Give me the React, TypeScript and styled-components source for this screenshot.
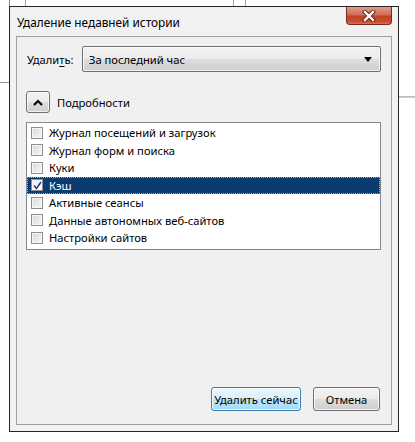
import React from "react";
import styled, { createGlobalStyle } from "styled-components";

const Global = createGlobalStyle`
  html, body { margin: 0; padding: 0; background: #fff; }
  body {
    font-family: "Noto Sans", "Segoe UI", sans-serif;
    font-size: 11.2px;
    color: #000;
  }
  * { box-sizing: border-box; }
`;

const Page = styled.div`
  width: 415px;
  height: 442px;
  padding: 6px 0 0 9px;
  background-color: #fff;
  background-image:
    linear-gradient(#8c8c8c, #8c8c8c),
    linear-gradient(#a8a8a8, #a8a8a8),
    linear-gradient(#a8a8a8, #a8a8a8),
    linear-gradient(#a8a8a8, #a8a8a8),
    linear-gradient(#9a9a9a, #9a9a9a),
    linear-gradient(#b4b4b4, #d8d8d8);
  background-repeat: no-repeat;
  background-size: 1px 6px, 1px 6px, 1px 6px, 1px 6px, 9px 1px, 16px 2px;
  background-position: 9px 0, 25px 0, 233px 0, 245px 0, 0 82px, 399px 96px;
`;

const Window = styled.div`
  width: 390px;
  height: 426px;
  border: 1px solid #262626;
  background: #f1f1f1;
  display: flex;
  flex-direction: column;
  padding: 0 6px 6px 6px;
`;

const TitleBar = styled.div`
  height: 29px;
  flex: none;
  display: flex;
  align-items: center;
  padding-left: 1px;
`;

const Title = styled.span`
  font-size: 11.8px;
  color: #000;
`;

const CloseButton = styled.div`
  margin-left: auto;
  align-self: flex-start;
  width: 46px;
  height: 18px;
  border: 1px solid #7a2a1c;
  border-top: none;
  border-radius: 0 0 4px 4px;
  background: linear-gradient(
    #e29a88 0%,
    #cf6e5a 45%,
    #c0432b 55%,
    #cc4c2d 85%,
    #dc7254 100%
  );
  display: flex;
  align-items: center;
  justify-content: center;
`;

const Client = styled.div`
  flex: 1;
  border: 1px solid #a0a0a0;
  background: #f0f0f0;
  display: flex;
  flex-direction: column;
  padding: 9px 10px 13px 9px;
`;

const FieldRow = styled.div`
  display: flex;
  align-items: center;
`;

const Label = styled.label`
  width: 56px;
  padding-left: 1px;
  color: #000;
  u { text-decoration: underline; text-underline-offset: 2px; }
`;

const Select = styled.div`
  flex: 1;
  height: 26px;
  border: 1px solid #707070;
  border-radius: 2px;
  background: linear-gradient(#f2f2f2 0%, #ebebeb 50%, #dddddd 51%, #cfcfcf 100%);
  box-shadow: inset 0 0 0 1px rgba(255, 255, 255, 0.7);
  display: flex;
  align-items: center;
  padding: 0 8px 0 6px;
`;

const SelectText = styled.span`
  flex: 1;
`;

const DetailsRow = styled.div`
  margin-top: 19px;
  display: flex;
  align-items: center;
  gap: 7px;
`;

const SquareButton = styled.div`
  width: 24px;
  height: 22px;
  border: 1px solid #707070;
  border-radius: 3px;
  background: linear-gradient(#f2f2f2 0%, #ebebeb 50%, #dddddd 51%, #cfcfcf 100%);
  box-shadow: inset 0 0 0 1px rgba(255, 255, 255, 0.7);
  display: flex;
  align-items: center;
  justify-content: center;
`;

const ListBox = styled.div`
  margin-top: 9px;
  height: 128px;
  border: 1px solid #828790;
  background: #fff;
  padding-top: 1px;
  display: flex;
  flex-direction: column;
`;

const Row = styled.div<{ $selected?: boolean }>`
  height: 17.5px;
  flex: none;
  display: flex;
  align-items: center;
  gap: 6px;
  padding-left: 4px;
  background: ${(p) => (p.$selected ? "#0b3b71" : "transparent")};
  color: ${(p) => (p.$selected ? "#fff" : "#000")};
  outline: ${(p) => (p.$selected ? "1px dotted #9fb3c8" : "none")};
  outline-offset: -1px;
  white-space: nowrap;
`;

const CheckBox = styled.div<{ $checked?: boolean }>`
  width: 12px;
  height: 12px;
  flex: none;
  border: 1px solid #8f8f8f;
  background: ${(p) =>
    p.$checked
      ? "linear-gradient(135deg, #e6ecf7, #ffffff)"
      : "linear-gradient(135deg, #d6d6d6, #fafafa)"};
  box-shadow: inset 0 0 0 1px #f6f6f6;
  display: flex;
  align-items: center;
  justify-content: center;
`;

const Footer = styled.div`
  margin-top: auto;
  display: flex;
  justify-content: flex-end;
  gap: 12px;
  padding-right: 1px;
`;

const Button = styled.button<{ $primary?: boolean; $w: number }>`
  width: ${(p) => p.$w}px;
  height: 24px;
  padding: 0;
  white-space: nowrap;
  font-family: "Noto Sans", "Segoe UI", sans-serif;
  font-size: 11.2px;
  color: #000;
  border-radius: 3px;
  border: 1px solid ${(p) => (p.$primary ? "#3c7fb1" : "#707070")};
  background: ${(p) =>
    p.$primary
      ? "linear-gradient(#eaf6fd 0%, #d9f0fc 50%, #bee6fd 51%, #a7d9f5 100%)"
      : "linear-gradient(#f2f2f2 0%, #ebebeb 50%, #dddddd 51%, #cfcfcf 100%)"};
  box-shadow: inset 0 0 0 1px rgba(255, 255, 255, 0.75);
`;

const items = [
  "Журнал посещений и загрузок",
  "Журнал форм и поиска",
  "Куки",
  "Кэш",
  "Активные сеансы",
  "Данные автономных веб-сайтов",
  "Настройки сайтов",
];

export default function App() {
  return (
    <>
      <Global />
      <Page>
        <Window>
          <TitleBar>
            <Title>Удаление недавней истории</Title>
            <CloseButton>
              <svg width="14" height="12" viewBox="0 0 14 12">
                <path d="M3 2 L11 10 M11 2 L3 10" stroke="#5a2418" strokeWidth="4.2" strokeLinecap="square" />
                <path d="M3 2 L11 10 M11 2 L3 10" stroke="#ffffff" strokeWidth="2.4" strokeLinecap="square" />
              </svg>
            </CloseButton>
          </TitleBar>
          <Client>
            <FieldRow>
              <Label>
                Удали<u>т</u>ь:
              </Label>
              <Select>
                <SelectText>За последний час</SelectText>
                <svg width="8" height="5" viewBox="0 0 8 5">
                  <path d="M0 0 H8 L4 5 Z" fill="#000" />
                </svg>
              </Select>
            </FieldRow>
            <DetailsRow>
              <SquareButton>
                <svg width="10" height="7" viewBox="0 0 10 7">
                  <path d="M1 6 L5 2 L9 6" stroke="#000" strokeWidth="2.2" fill="none" />
                </svg>
              </SquareButton>
              <span>Подробности</span>
            </DetailsRow>
            <ListBox>
              {items.map((t) => {
                const sel = t === "Кэш";
                return (
                  <Row key={t} $selected={sel}>
                    <CheckBox $checked={sel}>
                      {sel && (
                        <svg width="9" height="9" viewBox="0 0 9 9">
                          <path d="M1 4.5 L3.5 7.5 L8 1" stroke="#2a3f7a" strokeWidth="1.6" fill="none" />
                        </svg>
                      )}
                    </CheckBox>
                    <span>{t}</span>
                  </Row>
                );
              })}
            </ListBox>
            <Footer>
              <Button $primary $w={90}>Удалить сейчас</Button>
              <Button $w={67}>Отмена</Button>
            </Footer>
          </Client>
        </Window>
      </Page>
    </>
  );
}
